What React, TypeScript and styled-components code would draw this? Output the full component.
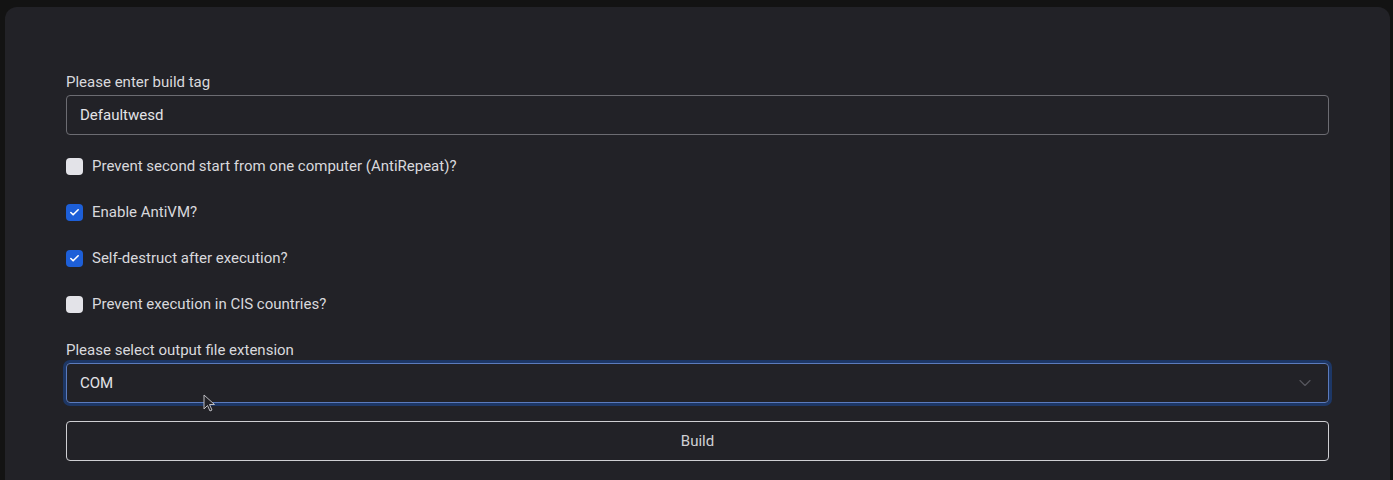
import React, { useState } from 'react';
import styled, { createGlobalStyle } from 'styled-components';
import { ChevronDown, Check } from 'lucide-react';

const GlobalStyle = createGlobalStyle`
  html, body {
    margin: 0;
    padding: 0;
    background-color: #131313;
    font-family: Roboto, 'Liberation Sans', sans-serif;
  }
  * {
    box-sizing: border-box;
  }
`;

const Page = styled.div`
  padding: 7px 3px 0 5px;
  min-height: 480px;
`;

const Card = styled.div`
  position: relative;
  background-color: #222227;
  border-radius: 12px 12px 0 0;
  padding: 64px 61px 40px 61px;
  min-height: 473px;
`;

const FieldLabel = styled.label`
  display: block;
  font-size: 15px;
  line-height: 22px;
  color: #d9d9dd;
  margin-bottom: 2px;
`;

const TextInput = styled.input`
  display: block;
  width: 100%;
  height: 40px;
  padding: 0 13px;
  background: transparent;
  border: 1px solid #6c6c72;
  border-radius: 4px;
  color: #e4e4e8;
  font-family: inherit;
  font-size: 15px;
  outline: none;
`;

const CheckList = styled.div`
  display: flex;
  flex-direction: column;
  gap: 24px;
  margin: 20px 0 24px;
`;

const CheckRow = styled.label`
  display: flex;
  align-items: center;
  gap: 9px;
  height: 22px;
  cursor: pointer;
`;

const Box = styled.span<{ $checked: boolean }>`
  width: 17px;
  height: 17px;
  border-radius: 4px;
  display: flex;
  align-items: center;
  justify-content: center;
  background-color: ${p => (p.$checked ? '#1d5fd8' : '#e3e3e8')};
  color: #ffffff;
  flex-shrink: 0;
`;

const CheckText = styled.span`
  font-size: 15px;
  color: #d9d9dd;
`;

const SelectWrap = styled.div`
  position: relative;
  height: 40px;
  border: 1px solid #5b7bbd;
  border-radius: 4px;
  box-shadow: 0 0 0 3px #1d3766;
  display: flex;
  align-items: center;
  padding: 0 13px;
  color: #e4e4e8;
  font-size: 15px;
`;

const SelectValue = styled.span`
  flex: 1;
`;

const Chevron = styled.span`
  display: flex;
  color: #56565d;
  margin-right: 0;
`;

const BuildButton = styled.button`
  display: block;
  width: 100%;
  height: 40px;
  margin-top: 18px;
  background: transparent;
  border: 1px solid #cfcfd3;
  border-radius: 4px;
  color: #d0d0d4;
  font-family: inherit;
  font-size: 15px;
  cursor: pointer;
`;

const Cursor = styled.svg`
  position: absolute;
  left: 136px;
  top: 30px;
`;

const options = [
  { label: 'Prevent second start from one computer (AntiRepeat)?', checked: false },
  { label: 'Enable AntiVM?', checked: true },
  { label: 'Self-destruct after execution?', checked: true },
  { label: 'Prevent execution in CIS countries?', checked: false },
];

const App = () => {
  const [tag, setTag] = useState('Defaultwesd');
  const [checks, setChecks] = useState(options.map(o => o.checked));

  return (
    <Page>
      <GlobalStyle />
      <Card>
        <FieldLabel htmlFor="build-tag">Please enter build tag</FieldLabel>
        <TextInput id="build-tag" value={tag} onChange={e => setTag(e.target.value)} />

        <CheckList>
          {options.map((o, i) => (
            <CheckRow
              key={o.label}
              onClick={() => setChecks(c => c.map((v, j) => (j === i ? !v : v)))}
            >
              <Box $checked={checks[i]}>{checks[i] && <Check size={11} strokeWidth={3.5} />}</Box>
              <CheckText>{o.label}</CheckText>
            </CheckRow>
          ))}
        </CheckList>

        <FieldLabel>Please select output file extension</FieldLabel>
        <SelectWrap>
          <SelectValue>COM</SelectValue>
          <Chevron>
            <ChevronDown size={20} strokeWidth={1.4} />
          </Chevron>
          <Cursor width="14" height="18" viewBox="0 0 14 18">
            <path d="M1 1 L1 15 L4.5 11.5 L7 17 L9 16 L6.5 10.5 L11.5 10.5 Z" fill="#222227" stroke="#bdbdc2" strokeWidth="1" strokeLinejoin="round" />
          </Cursor>
        </SelectWrap>

        <BuildButton>Build</BuildButton>
      </Card>
    </Page>
  );
};

export default App;
